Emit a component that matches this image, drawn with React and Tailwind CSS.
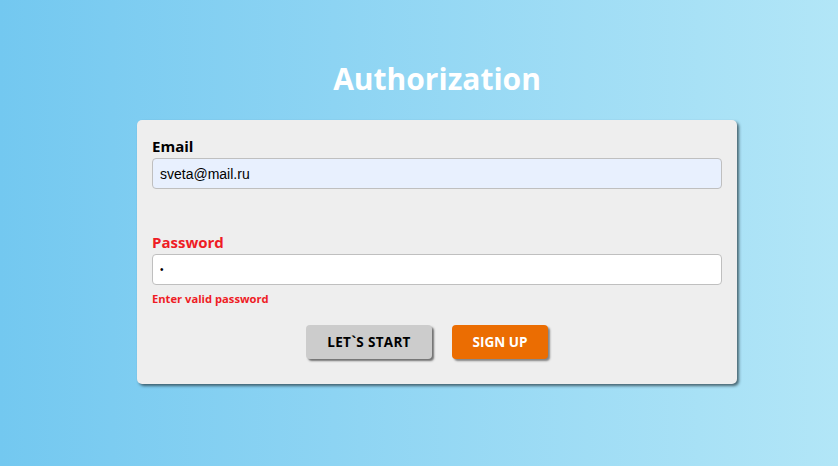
export default function App() {
  return (
    <div className="w-[838px] h-[466px] bg-gradient-to-r from-[#73c8f0] to-[#b2e6f7] flex flex-col items-center overflow-hidden pl-[36px]" style={{ fontFamily: '"Open Sans", "DejaVu Sans", sans-serif' }}>
      <h1 className="mt-[58px] text-[30px] leading-[42px] font-bold text-white tracking-[0px]">Authorization</h1>
      <div className="mt-[20px] w-[600px] h-[264px] bg-[#eeeeee] rounded-[5px] shadow-[2px_2px_3px_rgba(40,60,70,0.75)] px-[15px] pt-[15px]">
        <label className="block text-[15px] leading-[22px] font-bold text-black">Email</label>
        <input readOnly value="sveta@mail.ru" className="mt-[1px] block w-[570px] h-[31px] bg-[#e8f0fe] border border-[#bfbfbf] rounded-[4px] px-[7px] text-[14px] text-black outline-none" style={{ fontFamily: '"Liberation Sans", Arial, sans-serif' }} />
        <label className="block mt-[42px] text-[15px] leading-[22px] font-bold text-[#ee1c25]">Password</label>
        <input readOnly type="password" value="a" className="mt-[1px] block w-[570px] h-[31px] bg-white border border-[#bfbfbf] rounded-[4px] px-[7px] text-[10px] text-black outline-none" style={{ fontFamily: '"Liberation Sans", Arial, sans-serif' }} />
        <div className="mt-[6px] text-[11.2px] leading-[16px] font-bold text-[#ee1c25]">Enter valid password</div>
        <div className="mt-[18px] flex justify-center gap-[20px] pr-[20px]">
          <button className="w-[126px] h-[34px] bg-[#cccccc] rounded-[4px] shadow-[2px_2px_2px_rgba(60,60,60,0.7)] text-[13.5px] font-bold text-black tracking-[0.3px]">LET`S START</button>
          <button className="w-[96px] h-[34px] bg-[#eb6d02] rounded-[4px] shadow-[2px_2px_2px_rgba(60,60,60,0.6)] text-[13.5px] font-bold text-white">SIGN UP</button>
        </div>
      </div>
    </div>
  );
}
